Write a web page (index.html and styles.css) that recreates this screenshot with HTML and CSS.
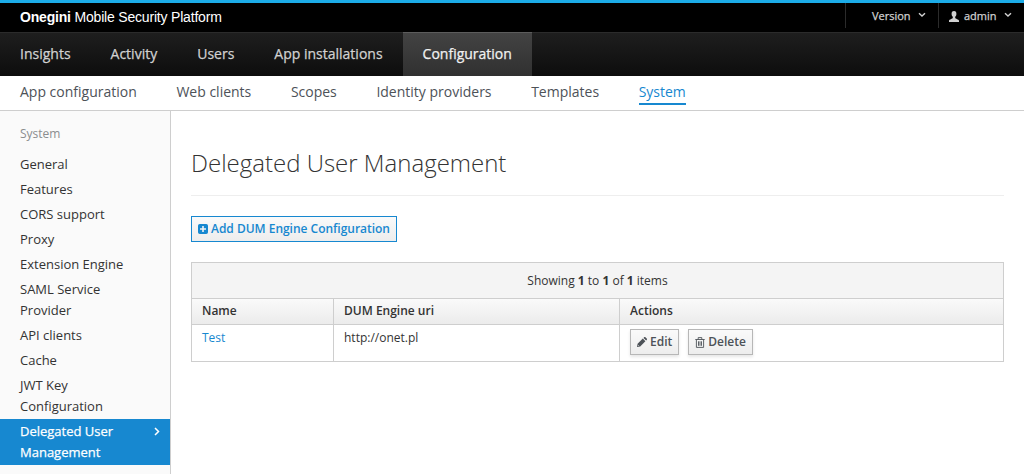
FILE: index.html
```html
<!DOCTYPE html>
<html lang="en">
<head>
<meta charset="utf-8">
<title>Delegated User Management</title>
<link rel="stylesheet" href="styles.css">
</head>
<body>
<header class="topbar">
  <div class="brand"><b>Onegini</b> <span>Mobile Security Platform</span></div>
  <div class="utility">
    <a class="util version"><span>Version</span><svg class="caret" width="8" height="6" viewBox="0 0 8 6"><path d="M1 1.2 4 4l3-2.8"/></svg></a>
    <a class="util user"><svg class="person" width="10" height="11" viewBox="0 0 10 11"><path d="M5 0C3.300 0 2.500 1.200 2.600 2.900c.05 1.300.5 2.200 1.200 2.900v1.100C3.600 7.900.2 8 0 9.600V11h10V9.600C9.800 8 6.400 7.900 6.200 6.900V5.800c.7-.7 1.150-1.600 1.200-2.900C7.500 1.200 6.700 0 5 0z"/></svg><span>admin</span><svg class="caret" width="8" height="6" viewBox="0 0 8 6"><path d="M1 1.200 4 4l3-2.800"/></svg></a>
  </div>
</header>
<nav class="mainnav">
  <a>Insights</a><a>Activity</a><a>Users</a><a>App installations</a><a class="current">Configuration</a>
</nav>
<nav class="subnav">
  <a>App configuration</a><a>Web clients</a><a>Scopes</a><a>Identity providers</a><a>Templates</a><a class="current">System</a>
</nav>
<div class="page">
  <aside class="sidebar">
    <h2>System</h2>
    <ul>
      <li>General</li>
      <li>Features</li>
      <li>CORS support</li>
      <li>Proxy</li>
      <li>Extension Engine</li>
      <li>SAML Service Provider</li>
      <li>API clients</li>
      <li>Cache</li>
      <li>JWT Key Configuration</li>
      <li class="current"><span>Delegated User Management</span><svg width="6" height="9" viewBox="0 0 6 9"><path d="M1 1l3.500 3.500L1 8"/></svg></li>
    </ul>
  </aside>
  <main class="content">
    <h1>Delegated User Management</h1>
    <a class="btn primary"><svg width="10" height="10" viewBox="0 0 10 10"><path fill-rule="evenodd" d="M1.800 0h6.400A1.800 1.800 0 0 1 10 1.800v6.400A1.800 1.800 0 0 1 8.200 10H1.800A1.800 1.800 0 0 1 0 8.200V1.800A1.800 1.800 0 0 1 1.800 0zM4.200 2v2.200H2v1.600h2.200V8h1.600V5.800H8V4.200H5.800V2z"/></svg><span>Add DUM Engine Configuration</span></a>
    <table class="grid">
      <colgroup><col class="c-name"><col class="c-uri"><col></colgroup>
      <thead>
        <tr class="summary"><td colspan="3">Showing <b>1</b> to <b>1</b> of <b>1</b> items</td></tr>
        <tr class="heads"><th>Name</th><th>DUM Engine uri</th><th>Actions</th></tr>
      </thead>
      <tbody>
        <tr><td><a class="link">Test</a></td><td>http://onet.pl</td><td class="actions"><div class="buttons">
          <a class="btn"><svg width="10" height="10" viewBox="0 0 10 10"><path fill-rule="evenodd" d="M0 10l.6-3.200L5.800 1.600 8.400 4.200 3.200 9.400zM6.500.9l.6-.6c.4-.4.9-.4 1.300 0l1.300 1.300c.4.4.4.900 0 1.300l-.6.600zM1.100 8l-.2 1.100 1.100-.2z"/></svg><span>Edit</span></a>
          <a class="btn"><svg class="trash" width="10" height="11" viewBox="0 0 10 11"><path d="M.3 2.500h9.400M3.200 2.300V.6h3.600v1.700M1.400 2.700v7.700h7.200V2.700M3.500 4.300v4.500M5 4.300v4.500M6.500 4.300v4.500"/></svg><span>Delete</span></a>
        </div></td></tr>
      </tbody>
    </table>
  </main>
</div>
</body>
</html>
```
FILE: styles.css
```css
* { box-sizing: border-box; }
body {
  margin: 0;
  height: 474px;
  display: flex;
  flex-direction: column;
  overflow: hidden;
  background: #fff;
  color: #333;
  font: 12px/20px "Open Sans", sans-serif;
}
svg { flex: none; fill: currentColor; }

.topbar {
  height: 32px;
  flex: none;
  border-top: 3px solid #1cace8;
  background: #000;
  display: flex;
  justify-content: space-between;
  padding-left: 20px;
}
.brand {
  color: #fff;
  font: 14px/28px "Liberation Sans", Arial, sans-serif;
  letter-spacing: -0.19px;
}
.utility { display: flex; height: 25px; }
.util {
  display: flex;
  align-items: center;
  border-left: 1px solid #2b2b2b;
  color: #d1d1d1;
  font-size: 11px;
  -webkit-text-stroke: .25px;
  padding-top: 1px;
}
.version { width: 93px; padding-left: 26px; }
.user { width: 86px; padding-left: 10px; }
.person { margin-right: 5px; }
.caret { margin: -2px 0 0 7px; }
.caret path { fill: none; stroke: currentColor; stroke-width: 1.4; }

.mainnav {
  height: 44px;
  flex: none;
  display: flex;
  border-top: 1px solid #2b2b2b;
  background: linear-gradient(#1e1e1e, #0d0d0d);
}
.mainnav a {
  color: #d1d1d1;
  font-size: 14px;
  -webkit-text-stroke: .25px;
  line-height: 42px;
  padding: 0 20px;
}
.mainnav a.current {
  margin-top: -1px;
  border-top: 1px solid #5c5c5c;
  background: linear-gradient(#434343, #303030);
  color: #f1f1f1;
}
.subnav {
  height: 35px;
  flex: none;
  display: flex;
  align-items: flex-start;
  gap: 39.600px;
  padding: 5px 20px 0;
  border-bottom: 1px solid #cecece;
  font-size: 14px;
  line-height: 22px;
  color: #4d5258;
}
.subnav .current { color: #1788d0; border-bottom: 2px solid #1788d0; }

.page { display: flex; flex: 1; min-height: 0; }
.sidebar {
  width: 171px;
  flex: none;
  border-right: 1px solid #cecece;
  background: #fafafa;
  padding-top: 12px;
  font-size: 13px;
  line-height: 21px;
}
.sidebar h2 { margin: 0 0 8px; padding-left: 20px; font-size: 12px; font-weight: 400; color: #8b8d8f; }
.sidebar ul { list-style: none; margin: 0; padding: 0; }
.sidebar li { padding: 2px 40px 2px 20px; }
.sidebar li.current {
  display: flex;
  justify-content: space-between;
  padding-right: 10px;
  background: #1788d0;
  color: #fff;
  -webkit-text-stroke: .25px;
}
.sidebar li span { width: 110px; }
.sidebar li svg { margin-top: 6px; fill: none; stroke: currentColor; stroke-width: 1.5; }

.content { flex: 1; padding: 34px 20px 0; }
h1 {
  margin: 0 0 20px;
  height: 51px;
  border-bottom: 1px solid #eee;
  font-size: 24px;
  font-weight: 300;
  line-height: 36px;
}
.btn {
  display: inline-flex;
  align-items: center;
  gap: 3px;
  height: 26px;
  padding: 0 6px;
  border: 1px solid #b7b7b7;
  background: linear-gradient(#fafafa, #ededed);
  box-shadow: 0 2px 3px rgba(0, 0, 0, .1);
  color: #4d5258;
  font-size: 12px;
  font-weight: 600;
  white-space: nowrap;
}
.btn.primary { display: flex; width: 206px; border-color: #1788d0; color: #1788d0; box-shadow: none; letter-spacing: -.02px; }
.trash path { fill: none; stroke: currentColor; stroke-width: .9; }

.grid {
  width: 100%;
  margin-top: 20px;
  border-collapse: collapse;
  table-layout: fixed;
}
.grid th, .grid td { border: 1px solid #cecece; padding: 0 10px; text-align: left; }
.grid .summary td { height: 36px; background: #f4f4f4; text-align: center; }
.heads { background: linear-gradient(#fafafa, #ebebeb); }
.grid th { height: 26px; padding-bottom: 2px; font-weight: 600; }
.c-name { width: 142px; }
.c-uri { width: 286px; }
.grid tbody td { height: 37px; padding-top: 3px; vertical-align: top; }
.grid tbody td.actions { padding-top: 4px; }
.buttons { display: flex; gap: 9px; }
.link { color: #1788d0; }
```
